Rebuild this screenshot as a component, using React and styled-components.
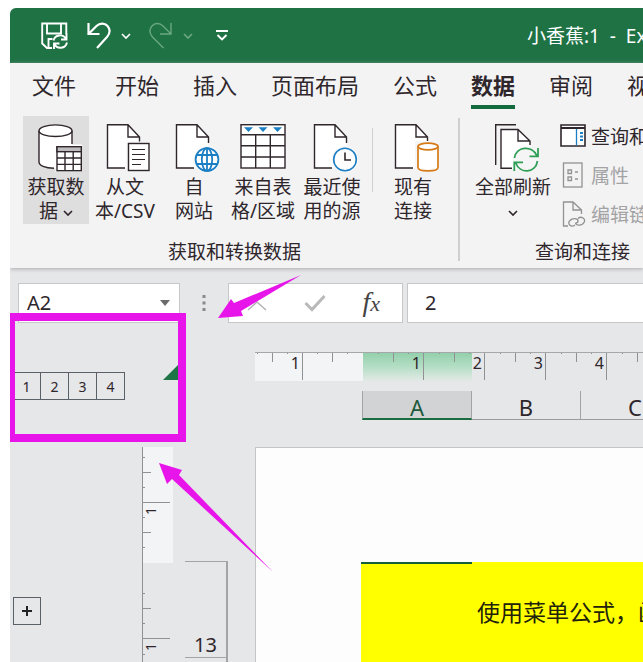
import React, { useState } from "react";
import styled, { createGlobalStyle, css } from "styled-components";

const INK = '#2e262b'
const GREEN = '#1e7244'

const tabs = ['文件', '开始', '插入', '页面布局', '公式', '数据', '审阅', '视图']
const columns = ['A', 'B', 'C']
const rulerLabels = ['1', '', '1', '2', '3', '4', '']

const Chevron = ({ size = 10 }) => (
  <svg width={size} height={size} viewBox='0 0 10 10' fill='none' stroke='currentColor' strokeWidth='1.6'>
    <path d='M1 3 L5 7 L9 3' />
  </svg>
)

const PageOutline = () => (
  <>
    <path d='M8.5 .7 H29 L40.5 13 V44 H8.5 Z' fill='#fff' stroke='none' />
    <path d='M26 44 H8.5 V.7 H29 L40.5 13 V19 M29 .7 V13 H40.5' />
  </>
)

const BigIcon = ({ children }) => (
  <svg width='52' height='48' viewBox='0 0 52 48' fill='none' stroke={INK} strokeWidth='1.4'>{children}</svg>
)

const DatabaseIcon = () => (
  <BigIcon>
    <path d='M9 7 V38 C9 42 16 44.5 25 44.5 H42 V7' fill='#fff' stroke='none' />
    <ellipse cx='25.5' cy='6.7' rx='16.5' ry='5.8' fill='#fff' />
    <path d='M9 6.7 V38 C9 41.5 15 44 24 44.3 M42 6.7 V20' />
    <rect x='27' y='22' width='25' height='25' fill='#fff' stroke='#fff' strokeWidth='3' />
    <rect x='27' y='22.7' width='24.3' height='24' fill='#fff' />
    <rect x='27' y='22.7' width='24.3' height='5' fill='#bdbbbd' />
    <path d='M27 34 H51.3 M27 40.4 H51.3 M35 27.7 V46.7 M43.2 27.7 V46.7' />
  </BigIcon>
)

const TextFileIcon = () => (
  <BigIcon>
    <PageOutline />
    <rect x='29.5' y='19.5' width='20.5' height='27' fill='#fff' stroke='#f3f3f3' strokeWidth='4' />
    <rect x='29.5' y='19.5' width='20.5' height='27' fill='#fff' />
    <path d='M33 25.5 H46 M33 30.5 H46 M33 35.5 H46 M33 40.5 H42' strokeWidth='1.2' />
  </BigIcon>
)

const WebIcon = () => (
  <BigIcon>
    <PageOutline />
    <circle cx='39' cy='35.5' r='13.5' fill='#f8f8f8' stroke='none' />
    <g stroke='#1c7fc4' strokeWidth='1.8'>
      <circle cx='39' cy='35.5' r='11.4' fill='#fff' />
      <ellipse cx='39' cy='35.5' rx='5.2' ry='11.4' />
      <path d='M39 24 V47 M29 31 H49 M29 40 H49' />
    </g>
  </BigIcon>
)

const TableIcon = () => (
  <BigIcon>
    <rect x='4' y='.7' width='44' height='43.3' fill='#fff' />
    <path d='M4 10.7 H48 M4 21.8 H48 M4 33 H48 M18.7 10.7 V44 M33.3 10.7 V44' />
    <path d='M7 3.3 H16 L11.5 8 Z M21.5 3.3 H30.5 L26 8 Z M36 3.3 H45 L40.5 8 Z' fill='#1c7fc4' stroke='none' />
  </BigIcon>
)

const RecentIcon = () => (
  <BigIcon>
    <PageOutline />
    <circle cx='39' cy='35.5' r='13.5' fill='#f8f8f8' stroke='none' />
    <circle cx='39' cy='35.5' r='11.3' fill='#fff' stroke='#1c7fc4' strokeWidth='1.6' />
    <path d='M39 28.5 V36 H45' strokeWidth='1.6' />
  </BigIcon>
)

const ConnectionIcon = () => (
  <BigIcon>
    <PageOutline />
    <rect x='28' y='17' width='24' height='31' fill='#f5f5f5' stroke='none' />
    <g stroke='#d57a17' strokeWidth='1.7'>
      <path d='M31 22.5 V43.5 C31 48 51 48 51 43.5 V22.5' fill='#fff' />
      <ellipse cx='41' cy='22.5' rx='10' ry='3.3' fill='#fff' />
    </g>
  </BigIcon>
)

const RefreshIcon = () => (
  <BigIcon>
    <path d='M29 .8 H8.7 V41' />
    <path d='M14 5.5 H31 L43 17 V45 H14 Z' fill='#fff' stroke='none' />
    <path d='M25 44.3 H14 V5.5 H31 L43 17 V21 M31 5.5 V17 H43' />
    <circle cx='39' cy='35.5' r='13' fill='#f5f5f5' stroke='none' />
    <g stroke='#2f9e57' strokeWidth='1.8'>
      <path d='M27.5 34 C29 22.5 45 20.5 50 32 M51 24 V32.3 H42.5' />
      <path d='M50.5 37 C48.5 49.5 33 50.5 28.5 38.5 M27.3 47 V38.3 H36' />
    </g>
  </BigIcon>
)

const SmallIcon = ({ stroke = INK, children }) => (
  <svg width='26' height='26' viewBox='0 0 26 26' fill='none' stroke={stroke} strokeWidth='1.3'>{children}</svg>
)

const QueriesIcon = () => (
  <SmallIcon>
    <path d='M1 2 H25 V23 H1 Z' fill='#fff' strokeWidth='1.6' />
    <path d='M1 5 H25' strokeWidth='1.8' />
    <path d='M16.5 6 V22.5' stroke='#1c7fc4' />
    <path d='M20 10 H23 M20 13.5 H23 M20 17 H23' stroke='#1c7fc4' strokeWidth='2' />
  </SmallIcon>
)

const PropertiesIcon = () => (
  <SmallIcon stroke='#929292'>
    <rect x='3.5' y='1' width='18.5' height='24' />
    <path d='M8 8 H11.5 V11.5 H8 Z M8 15 H11.5 V18.5 H8 Z M15 10 H18 M15 17 H18' />
  </SmallIcon>
)

const EditLinksIcon = () => (
  <SmallIcon stroke='#929292'>
    <path d='M8 25 H3.5 V1 H13 L21.5 9 V13 M13 1 V9 H21.5' />
    <path d='M15 24 C11 27 6.5 22.5 10 19.5 C12 17 18 17 18 20 C18 21.5 16.5 22 15.5 22' />
    <path d='M18 17.5 C21 14.5 26.5 18 24 21.5 C22 25 16 25 15.5 22' />
  </SmallIcon>
)

const HorizontalRuler = () => (
  <HRuler>
    {rulerLabels.map((label, i) => (
      <HUnit key={i} $first={i === 0} $open={i === 1}>{label}</HUnit>
    ))}
  </HRuler>
)

const VerticalRuler = () => (
  <VRuler>
    <VUnit $height={56} />
    <VUnit $height={60} $open><span>1</span></VUnit>
    <VUnit $height={76} />
    <VUnit $height={61}><span>1</span></VUnit>
  </VRuler>
)

const App = () => {
  const [activeTab, setActiveTab] = useState('数据')
  const [cellName, setCellName] = useState('A2')
  const [formula, setFormula] = useState('2')

  return (
    <Window>
      <GlobalStyle />
      <TitleBar>
        <QuickAccess>
          <QuickButton aria-label='保存'>
            <svg width='28' height='28' viewBox='0 0 28 28' fill='none' stroke='#fff' strokeWidth='1.9'>
              <path d='M11 26 H6 L1.2 21.5 V1.5 H25.3 V12' />
              <path d='M6 1.5 V11.5 H20 V1.5 M7.5 26 V17 H11.5' />
              <path d='M12.5 18.5 C14 12.5 22 11.5 25 17 M25.5 11.5 V17.5 H20' />
              <path d='M26 20.5 C24.5 27 16 27.5 13.5 22 M13 27 V21.5 H18.5' />
            </svg>
          </QuickButton>
          <SplitButton>
            <QuickButton aria-label='撤消'>
              <svg width='24' height='28' viewBox='0 0 24 28' fill='none' stroke='#fff' strokeWidth='2.2'>
                <path d='M1.5 1 V12 H12.5 M2 11.5 L9.5 4 C13 .5 18 1 20.5 4 C23.5 7.5 23 11.5 20 15 L10 26' />
              </svg>
            </QuickButton>
            <QuickButton aria-label='撤消列表'><Chevron /></QuickButton>
          </SplitButton>
          <SplitButton $disabled>
            <QuickButton aria-label='恢复'>
              <svg width='24' height='28' viewBox='0 0 24 28' fill='none' stroke='currentColor' strokeWidth='1.4'>
                <path d='M22 1 V12 H11 M21.5 11.5 L14 4 C10.5 .5 5.5 1 3 4 C0 7.5 .5 11.5 3.5 15 L14.5 26' />
              </svg>
            </QuickButton>
            <QuickButton aria-label='恢复列表'><Chevron /></QuickButton>
          </SplitButton>
          <QuickButton aria-label='自定义快速访问工具栏'>
            <svg width='14' height='14' viewBox='0 0 14 14' fill='none' stroke='#fff' strokeWidth='1.9'>
              <path d='M1 2 H13 M2.5 6 L7 10.5 L11.5 6' />
            </svg>
          </QuickButton>
        </QuickAccess>
        <Title>小香蕉:1&nbsp; - &nbsp;Excel</Title>
      </TitleBar>

      <Ribbon>
        <TabList role='tablist'>
          {tabs.map(t => (
            <Tab key={t} role='tab' aria-selected={t === activeTab} $active={t === activeTab} onClick={() => setActiveTab(t)}>{t}</Tab>
          ))}
        </TabList>
        <Groups>
          <Group>
            <GroupTools>
              <BigButton $active><DatabaseIcon /><span>获取数<br />据 <Chevron /></span></BigButton>
              <BigButton><TextFileIcon /><span>从文<br />本/CSV</span></BigButton>
              <BigButton><WebIcon /><span>自<br />网站</span></BigButton>
              <BigButton><TableIcon /><span>来自表<br />格/区域</span></BigButton>
              <BigButton><RecentIcon /><span>最近使<br />用的源</span></BigButton>
              <ToolDivider />
              <BigButton><ConnectionIcon /><span>现有<br />连接</span></BigButton>
            </GroupTools>
            <GroupLabel>获取和转换数据</GroupLabel>
          </Group>
          <GroupDivider />
          <Group>
            <GroupTools>
              <BigButton $wide><RefreshIcon /><span>全部刷新<br /><Chevron /></span></BigButton>
              <SmallTools>
                <SmallButton><QueriesIcon />查询和连接</SmallButton>
                <SmallButton disabled><PropertiesIcon />属性</SmallButton>
                <SmallButton disabled><EditLinksIcon />编辑链接</SmallButton>
              </SmallTools>
            </GroupTools>
            <GroupLabel>查询和连接</GroupLabel>
          </Group>
        </Groups>
      </Ribbon>

      <FormulaBar>
        <NameBox>
          <BarInput aria-label='名称框' value={cellName} onChange={e => setCellName(e.target.value)} />
          <DropButton aria-label='名称列表'>
            <svg width='10' height='6' viewBox='0 0 10 6'><path d='M0 0 H10 L5 6 Z' fill='#6b6b6b' /></svg>
          </DropButton>
        </NameBox>
        <Grip>
          <svg width='4' height='18' viewBox='0 0 4 18' fill='#8a8a8a'>
            <path d='M.5 1 H3.5 V4 H.5 Z M.5 7.5 H3.5 V10.5 H.5 Z M.5 14 H3.5 V17 H.5 Z' />
          </svg>
        </Grip>
        <FormulaActions>
          <BarButton aria-label='取消'>
            <svg width='20' height='20' viewBox='0 0 20 20' fill='none' stroke='#b4b4b4' strokeWidth='1.5'><path d='M1 17 L10 9 L19 17' /></svg>
          </BarButton>
          <BarButton aria-label='输入'>
            <svg width='22' height='18' viewBox='0 0 22 18' fill='none' stroke='#b9b9b9' strokeWidth='3'><path d='M1.5 9 L8 15.5 L20.5 2' /></svg>
          </BarButton>
          <BarButton aria-label='插入函数'><em>f<small>x</small></em></BarButton>
        </FormulaActions>
        <FormulaBox>
          <BarInput aria-label='编辑栏' value={formula} onChange={e => setFormula(e.target.value)} />
        </FormulaBox>
      </FormulaBar>

      <Workspace>
        <Corner>
          <Levels>
            {[1, 2, 3, 4].map(n => <OutlineButton key={n}>{n}</OutlineButton>)}
          </Levels>
          <svg width='18' height='18' viewBox='0 0 18 18'><path d='M0 17 L17 0 V17 Z' fill='#1f7445' /></svg>
        </Corner>
        <Headers>
          <HorizontalRuler />
          <ColumnHeaders>
            {columns.map((c, i) => <ColumnHeader key={c} $selected={i === 0}>{c}</ColumnHeader>)}
          </ColumnHeaders>
        </Headers>
        <OutlinePane>
          <OutlineButton $expand aria-label='展开'>
            <svg width='12' height='12' viewBox='0 0 12 12' stroke='#222' strokeWidth='2'><path d='M1 6 H11 M6 1 V11' /></svg>
          </OutlineButton>
        </OutlinePane>
        <VerticalRuler />
        <RowHeaders>
          <RowHeader>13</RowHeader>
          <RowHeader />
        </RowHeaders>
        <Sheet>
          <MergedCell>使用菜单公式，函数</MergedCell>
        </Sheet>
      </Workspace>

      <HighlightFrame />
      <Arrows width='300' height='600' viewBox='0 0 300 600' fill='#e815ea'>
        <path d='M208 310 L221 291 L224 295 L291 267 L231 303 L233 308 Z' />
        <path d='M149 455 L172 462 L169 467 L263 564 L162 471 L157 476 Z' />
      </Arrows>
    </Window>
  );
};


const GlobalStyle = createGlobalStyle`
  * {
    box-sizing: border-box;
  }

  body {
    margin: 0;
    background: #fff;
    color: ${INK};
    font-family: "Noto Sans", "Noto Sans CJK SC", sans-serif;
  }

  button, input {
    font: inherit;
    color: inherit;
    border: none;
    outline: none;
    background: none;
    padding: 0;
    margin: 0;
  }

  svg {
    flex-shrink: 0;
  }
`;

const Window = styled.div`
  position: relative;
  display: flex;
  flex-direction: column;
  height: calc(100vh - 8px);
  margin: 8px 0 0 10px;
  border-top-left-radius: 6px;
  overflow: hidden;
  background: #e6e7e8;
`;

const TitleBar = styled.header`
  display: flex;
  flex-shrink: 0;
  align-items: center;
  justify-content: space-between;
  height: 55px;
  padding-left: 31px;
  background: ${GREEN};
  color: #fff;
`;

const QuickButton = styled.button`
  display: flex;
`;

const QuickAccess = styled.div`
  display: flex;
  align-items: center;
  gap: 18px;

  > ${QuickButton}:last-child {
    margin-left: 4px;
  }
`;

const SplitButton = styled.div`
  display: flex;
  align-items: center;
  gap: 10px;
  color: ${p => p.$disabled ? '#6aa783' : '#fff'};
`;

const Title = styled.div`
  flex: 0 0 116px;
  min-width: 0;
  font-size: 19px;
  line-height: 24px;
  white-space: nowrap;
`;

const Ribbon = styled.section`
  flex-shrink: 0;
  height: 205px;
  background: #f3f3f4;
  box-shadow: 0 1px 4px #aaaaad;
`;

const TabList = styled.div`
  display: flex;
  gap: 34px;
  height: 46px;
  padding-left: 22px;
`;

const Tab = styled.button`
  flex-shrink: 0;
  font-size: 22px;
  line-height: 32px;
  padding-top: 2px;
  border-bottom: 4px solid ${p => p.$active ? '#136a3c' : 'transparent'};
  font-weight: ${p => p.$active ? 700 : 400};
  white-space: nowrap;

  &:first-child {
    margin-right: 5px;
  }
`;

const Groups = styled.div`
  display: flex;
  padding: 7px 0 0 13px;
`;

const Group = styled.div`
  flex-shrink: 0;
`;

const GroupTools = styled.div`
  display: flex;
  gap: 3px;
  height: 124px;
`;

const GroupLabel = styled.div`
  font-size: 19px;
  line-height: 24px;
  text-align: center;
`;

const GroupDivider = styled.div`
  flex-shrink: 0;
  width: 2px;
  height: 143px;
  margin: 2px 11px 0 12px;
  background: #cfcfcf;
`;

const ToolDivider = styled.div`
  width: 1px;
  height: 64px;
  margin: 12px 4px 0;
  background: #d0d0d0;
`;

const BigButton = styled.button`
  display: flex;
  flex-direction: column;
  align-items: center;
  gap: 3px;
  width: ${p => p.$wide ? 84 : 66}px;
  height: 108px;
  padding-top: 8px;
  font-size: 19px;
  line-height: 24px;
  white-space: nowrap;
  background: ${p => p.$active ? '#dedede' : 'transparent'};
`;

const SmallTools = styled.div`
  display: flex;
  flex-direction: column;
`;

const SmallButton = styled.button`
  display: flex;
  align-items: center;
  gap: 5px;
  height: 39px;
  padding: 0 8px 0 2px;
  font-size: 19px;
  white-space: nowrap;

  &:disabled {
    color: #a3a3a5;
  }
`;

const FormulaBar = styled.div`
  display: flex;
  flex-shrink: 0;
  height: 55px;
  padding: 15px 0 0 8px;
`;

const barBox = css`
  display: flex;
  flex-shrink: 0;
  align-items: center;
  height: 40px;
  background: #fff;
  border: 1px solid #c6c7c9;
`;

const NameBox = styled.div`
  ${barBox}
  width: 162px;
  padding: 0 9px 0 8px;
`;

const BarInput = styled.input`
  flex: 1;
  width: 0;
  font-size: 20px;
  line-height: 28px;
`;

const DropButton = styled.button`
  display: flex;
`;

const Grip = styled.div`
  display: flex;
  flex-shrink: 0;
  align-items: center;
  justify-content: center;
  width: 48px;
`;

const FormulaActions = styled.div`
  ${barBox}
  justify-content: space-between;
  width: 175px;
  padding: 0 22px 0 18px;
`;

const BarButton = styled.button`
  display: flex;

  em {
    font-family: "Liberation Serif", serif;
    font-size: 28px;
    line-height: 32px;
    color: #444;
  }

  small {
    font-size: 22px;
  }
`;

const FormulaBox = styled.div`
  ${barBox}
  flex: 1;
  margin-left: 4px;
  padding-left: 17px;
  border-right: none;
`;

// outline pane | vertical ruler | row numbers | sheet
const Workspace = styled.main`
  display: grid;
  flex: 1;
  min-height: 0;
  grid-template-columns: 132px 43px 70px minmax(0, 1fr);
  grid-template-rows: 124px minmax(0, 1fr);
`;

const Corner = styled.div`
  grid-column: 1 / 4;
  display: flex;
  align-items: flex-start;
  justify-content: space-between;
  width: 171px;
  padding: 40px 0 0 2px;
`;

const Levels = styled.div`
  display: flex;
  padding-top: 9px;
`;

const OutlineButton = styled.button`
  display: flex;
  align-items: center;
  justify-content: center;
  width: ${p => p.$expand ? 28 : 29}px;
  height: 28px;
  font-size: 14px;
  border: 1px solid #5a6068;

  & + & {
    margin-left: -1px;
  }
`;

const Headers = styled.div`
  padding-top: 29px;
  overflow: hidden;
`;

const HRuler = styled.div`
  display: flex;
  height: 29px;
  border-top: 1px solid #a5a7a9;
  background:
    linear-gradient(#f3f4f5, #f3f4f5) 0 0 / 108px 100% no-repeat,
    linear-gradient(#93d0ac, #b5dec6 50%, #e3e9e6) 108px 0 / 109px 100% no-repeat;
`;

const HUnit = styled.div`
  flex: 0 0 ${p => p.$first ? 48 : p.$open ? 60 : 61}px;
  height: 27px;
  padding-right: 2px;
  font-size: 16px;
  line-height: 20px;
  text-align: right;
  border-right: 1px solid ${p => p.$open ? 'transparent' : '#8f9193'};
  background:
    linear-gradient(#8f9193, #8f9193) right 29px top 0 / 1px 9px no-repeat,
    linear-gradient(#8f9193, #8f9193) right 14px top 0 / 1px 1px no-repeat,
    linear-gradient(#8f9193, #8f9193) right 44px top 0 / 1px 1px no-repeat;
`;

const ColumnHeaders = styled.div`
  display: flex;
  height: 29px;
  margin: 10px 0 0 107px;
`;

const ColumnHeader = styled.div`
  flex: 0 0 109px;
  font-size: 22px;
  line-height: 32px;
  text-align: center;
  border-right: 1px solid #a2a4a6;
  border-bottom: 1px solid #9a9c9e;

  ${p => p.$selected && css`
    color: #1d5a3b;
    background: #d2d3d4;
    border-left: 1px solid #a2a4a6;
    border-bottom: 2px solid #1a6b40;
    flex-basis: 110px;
  `}
`;

const OutlinePane = styled.div`
  padding: 150px 0 0 3px;
`;

const VRuler = styled.div`
  width: 31px;
  overflow: hidden;
  border-left: 1px solid #8f9193;
  background: linear-gradient(#f3f4f5, #f3f4f5) 0 0 / 100% 116px no-repeat;
`;

const VUnit = styled.div`
  width: 27px;
  height: ${p => p.$height}px;
  border-bottom: 1px solid ${p => p.$open ? 'transparent' : '#8f9193'};
  background:
    linear-gradient(#8f9193, #8f9193) left 0 bottom 29px / 8px 1px no-repeat,
    linear-gradient(#8f9193, #8f9193) left 0 bottom 14px / 2px 1px no-repeat,
    linear-gradient(#8f9193, #8f9193) left 0 bottom 44px / 2px 1px no-repeat;

  span {
    display: block;
    width: 16px;
    height: 16px;
    font-size: 14px;
    line-height: 16px;
    text-align: center;
    transform: rotate(-90deg);
  }
`;

const RowHeaders = styled.div`
  width: 43px;
  padding-top: 114px;
  overflow: hidden;
`;

const RowHeader = styled.div`
  display: flex;
  align-items: flex-end;
  justify-content: flex-end;
  height: 97px;
  padding-right: 9px;
  font-size: 20px;
  line-height: 24px;
  border-right: 2px solid #a2a4a6;
  border-bottom: 1px solid #a2a4a6;

  &:first-child {
    border-top: 1px solid #a2a4a6;
  }
`;

const Sheet = styled.div`
  padding: 114px 0 0 105px;
  overflow: hidden;
  background: #fdfdfe;
  border-top: 1px solid #c4c5c7;
  border-left: 1px solid #c4c5c7;
`;

const MergedCell = styled.div`
  height: 240px;
  padding: 34px 0 0 116px;
  font-size: 23px;
  line-height: 32px;
  white-space: nowrap;
  color: #22220a;
  background: linear-gradient(#14603a, #14603a) 0 0 / 111px 2px no-repeat, #ffff00;
`;

const HighlightFrame = styled.div`
  position: absolute;
  left: 0;
  top: 305px;
  width: 176px;
  height: 129px;
  border: 8px solid #e815ea;
  border-left-width: 5px;
  pointer-events: none;
`;

const Arrows = styled.svg`
  position: absolute;
  left: 0;
  top: 0;
  pointer-events: none;
`;

export default App
